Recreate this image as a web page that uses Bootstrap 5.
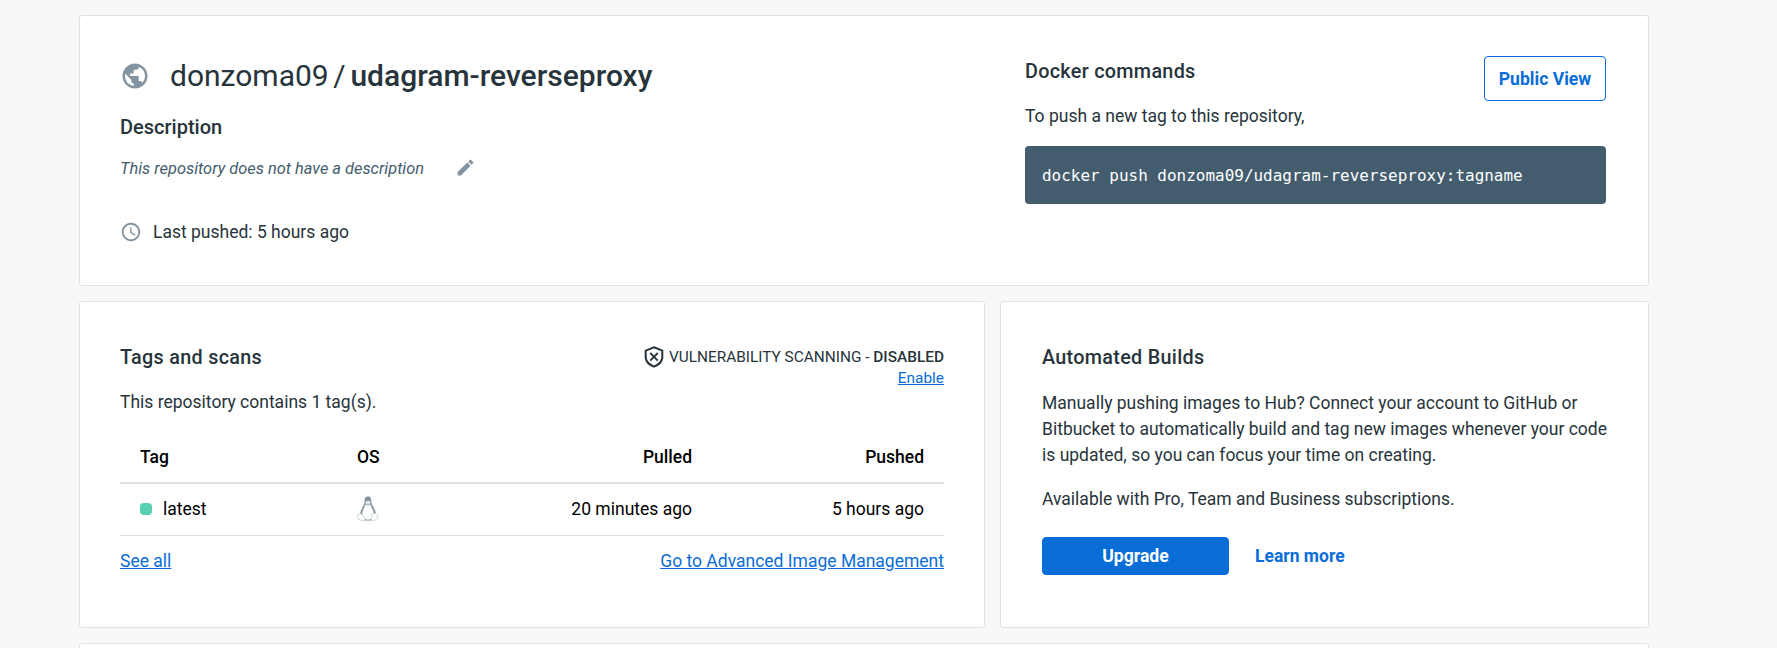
<!DOCTYPE html>
<html lang="en">
<head>
<meta charset="utf-8">
<meta name="viewport" content="width=device-width, initial-scale=1">
<title>donzoma09/udagram-reverseproxy</title>
<link href="https://cdn.jsdelivr.net/npm/bootstrap@5.3.0/dist/css/bootstrap.min.css" rel="stylesheet">
<style>
  body { background: #f7f8fa; color: #27343b; font-family: Roboto, "Liberation Sans", sans-serif; font-size: 17.5px; line-height: 26px; height: 648px; overflow: hidden; }
  a { color: #086dd7; }
  .page { width: 1570px; height: 648px; overflow: hidden; margin-left: 79px; padding-top: 15px; gap: 15px; }
  .panel { --bs-card-border-color: #e0e2e4; --bs-card-border-radius: 3px; --bs-card-inner-border-radius: 2px; --bs-card-bg: #fff; color: inherit; }
  .panel > .card-body { padding: 40px; }
  .panel-row { gap: 15px; }
  .overview { height: 271px; flex: none; }
  .overview > .card-body { padding-right: 42px; }
  .tags-panel { width: 906px; height: 327px; }
  .builds-panel { height: 327px; }
  .builds-panel > .card-body { padding-left: 41px; }
  .builds-panel p { margin: 0 0 18px; }
  .builds-panel h2 { margin-bottom: 19px; }
  .next-panel { flex: 1 0 0; border-bottom: 0; border-bottom-left-radius: 0; border-bottom-right-radius: 0; }
  .commands { width: 581px; }
  h1 { font-size: 30px; line-height: 40px; font-weight: 400; word-spacing: -2.8px; }
  h2 { font-size: 19.8px; line-height: 26px; font-weight: 500; letter-spacing: .3px; margin: 3px 0 18px; }
  h1 b, .state b { font-weight: 500; }
  .subhead { font-size: 20px; letter-spacing: 0; margin: 18px 0 16px; }
  .no-desc { font-size: 16.4px; color: #445d6e; }
  .pencil { margin: 0 0 4px 31px; }
  .pushed { margin-top: 37px; gap: 11px; }
  .ink-soft { fill: #8393a0; }
  .command { height: 58px; margin-top: 17px; background: #445d6e; color: #fff; border-radius: 4px; padding: 17px; font: 15.98px/26px "DejaVu Sans Mono", monospace; }
  .btn { font-size: 17.6px; font-weight: 700; line-height: 26px; --bs-btn-border-radius: 4px; padding: 0; }
  .btn-view { --bs-btn-color: #086dd7; --bs-btn-border-color: #086dd7; width: 122px; height: 45px; }
  .btn-upgrade { --bs-btn-color: #fff; --bs-btn-bg: #086dd7; --bs-btn-border-color: #086dd7; width: 187px; height: 38px; }
  .actions { gap: 26px; margin-top: 25px; }
  .learn { font-weight: 700; }
  .state { font-size: 15.4px; line-height: 21px; padding-top: 4px; }
  .state > div { gap: 5px; }
  .tag-table { --bs-table-bg: transparent; --bs-table-color: #000; color: #000; border-color: #e0e0e0; table-layout: fixed; margin: 15px 0 12px; }
  .tag-table th { font-weight: 500; height: 53px; border-bottom: 2px solid #e0e0e0; padding: 2px 20px 0; vertical-align: middle; }
  .tag-table td { height: 52px; border-bottom: 1px solid #e0e0e0; padding: 0 20px; vertical-align: middle; }
  .dot { width: 12px; height: 12px; border-radius: 4px; background: #58d1b1; }
  .tag-name { gap: 11px; }
</style>
</head>
<body>
<main class="page d-flex flex-column">
  <section class="card panel overview">
    <div class="card-body d-flex justify-content-between">
      <div>
        <div class="d-flex align-items-center">
          <svg class="ink-soft" width="30" height="30" viewBox="0 0 24 24"><path d="M12 2C6.48 2 2 6.48 2 12s4.48 10 10 10 10-4.48 10-10S17.52 2 12 2zm-1 17.93c-3.95-.49-7-3.85-7-7.93 0-.62.08-1.21.21-1.79L9 15v1c0 1.1.9 2 2 2v1.93zm6.9-2.54c-.26-.81-1-1.39-1.9-1.39h-1v-3c0-.55-.45-1-1-1H8v-2h2c.55 0 1-.45 1-1V7h2c1.1 0 2-.9 2-2v-.41c2.93 1.19 5 4.06 5 7.41 0 2.08-.8 3.97-2.1 5.39z"/></svg>
          <h1 class="mb-0 ms-3 ps-1">donzoma09 / <b>udagram-reverseproxy</b></h1>
        </div>
        <h2 class="subhead">Description</h2>
        <div class="d-flex align-items-center">
          <em class="no-desc">This repository does not have a description</em>
          <svg class="ink-soft pencil" width="21" height="21" viewBox="0 0 24 24"><path d="M3 17.25V21h3.75L17.81 9.94l-3.75-3.75L3 17.25zM20.71 7.04a1 1 0 0 0 0-1.41l-2.34-2.34a1 1 0 0 0-1.41 0l-1.83 1.83 3.75 3.75 1.83-1.83z"/></svg>
        </div>
        <div class="d-flex align-items-center pushed">
          <svg class="ink-soft" width="22" height="22" viewBox="0 0 24 24"><path d="M11.99 2C6.47 2 2 6.48 2 12s4.47 10 9.99 10C17.52 22 22 17.52 22 12S17.52 2 11.99 2zM12 20c-4.42 0-8-3.58-8-8s3.58-8 8-8 8 3.58 8 8-3.58 8-8 8zm.5-13H11v6l5.25 3.15.75-1.23-4.5-2.67z"/></svg>
          <span>Last pushed: 5 hours ago</span>
        </div>
      </div>
      <div class="commands">
        <div class="d-flex justify-content-between">
          <div>
            <h2>Docker commands</h2>
            <p class="mb-0">To push a new tag to this repository,</p>
          </div>
          <a class="btn btn-view d-flex align-items-center justify-content-center" href="#">Public View</a>
        </div>
        <div class="command text-nowrap">docker push donzoma09/udagram-reverseproxy:tagname</div>
      </div>
    </div>
  </section>

  <div class="d-flex panel-row">
    <section class="card panel tags-panel">
      <div class="card-body">
        <div class="d-flex justify-content-between">
          <div>
            <h2>Tags and scans</h2>
            <p class="mb-0">This repository contains 1 tag(s).</p>
          </div>
          <div class="state text-end">
            <div class="d-flex align-items-center">
              <svg width="20" height="22" viewBox="0 0 20 22" fill="none" stroke="#27343b" stroke-width="2"><path d="M10 1.300L18.300 4.600V12Q17.600 17.500 10 20.700Q2.400 17.500 1.700 12V4.600Z"/><path d="M6.200 7l7.600 7.600m0-7.600l-7.600 7.600" stroke-width="1.800"/></svg>
              <span>VULNERABILITY SCANNING - <b>DISABLED</b></span>
            </div>
            <a href="#">Enable</a>
          </div>
        </div>
        <table class="table tag-table">
          <colgroup><col style="width:217px"><col style="width:175px"><col style="width:200px"><col></colgroup>
          <thead><tr><th>Tag</th><th>OS</th><th class="text-end">Pulled</th><th class="text-end">Pushed</th></tr></thead>
          <tbody><tr>
            <td><div class="d-flex align-items-center tag-name"><span class="dot"></span><span>latest</span></div></td>
            <td>
              <svg class="d-block" width="22" height="26" viewBox="0 0 22 26"><path d="M11 .5C7.800.5 7.500 3 7.600 6 7.500 8.500 5 11 3.700 15.500L3 18l2 3 3 3.500h6l3-3.500 2-3-.7-3C17 11 14.400 8.500 14.300 6 14.400 3 14 .5 11 .5z" fill="#84949e"/><path d="M8.300 8.500l2.700 1 2.500-1c.5 3 3.200 5.500 3.200 9.500 0 3-2.200 5.700-5.700 5.700S5.300 21 5.300 18c0-4 2.500-6.500 3-9.500z" fill="#fff"/><path d="M8.600 5.300q1.200-1 2.400 0 1.200-1 2.400 0v2L11 9 8.600 7.500z" fill="#dfe4e7"/><path d="M3.500 17.500L8 22l-.7 3L1 23.200V18.500zM18.500 17.500L15 18l-.5 6.500 1.500.7 5-3.200-.7-3.500z" fill="#fff" stroke="#c7cdd1" stroke-width=".8"/></svg>
            </td>
            <td class="text-end text-nowrap">20 minutes ago</td><td class="text-end text-nowrap">5 hours ago</td>
          </tr></tbody>
        </table>
        <div class="d-flex justify-content-between"><a href="#">See all</a><a href="#">Go to Advanced Image Management</a></div>
      </div>
    </section>
    <section class="card panel builds-panel flex-grow-1">
      <div class="card-body">
        <h2>Automated Builds</h2>
        <p class="text-nowrap">Manually pushing images to Hub? Connect your account to GitHub or<br>Bitbucket to automatically build and tag new images whenever your code<br>is updated, so you can focus your time on creating.</p>
        <p class="mb-0">Available with Pro, Team and Business subscriptions.</p>
        <div class="d-flex align-items-center actions">
          <a class="btn btn-upgrade d-flex align-items-center justify-content-center" href="#">Upgrade</a>
          <a class="learn text-decoration-none" href="#">Learn more</a>
        </div>
      </div>
    </section>
  </div>
  <section class="card panel next-panel"></section>
</main>
<script src="https://cdn.jsdelivr.net/npm/bootstrap@5.3.0/dist/js/bootstrap.bundle.min.js"></script>
</body>
</html>
